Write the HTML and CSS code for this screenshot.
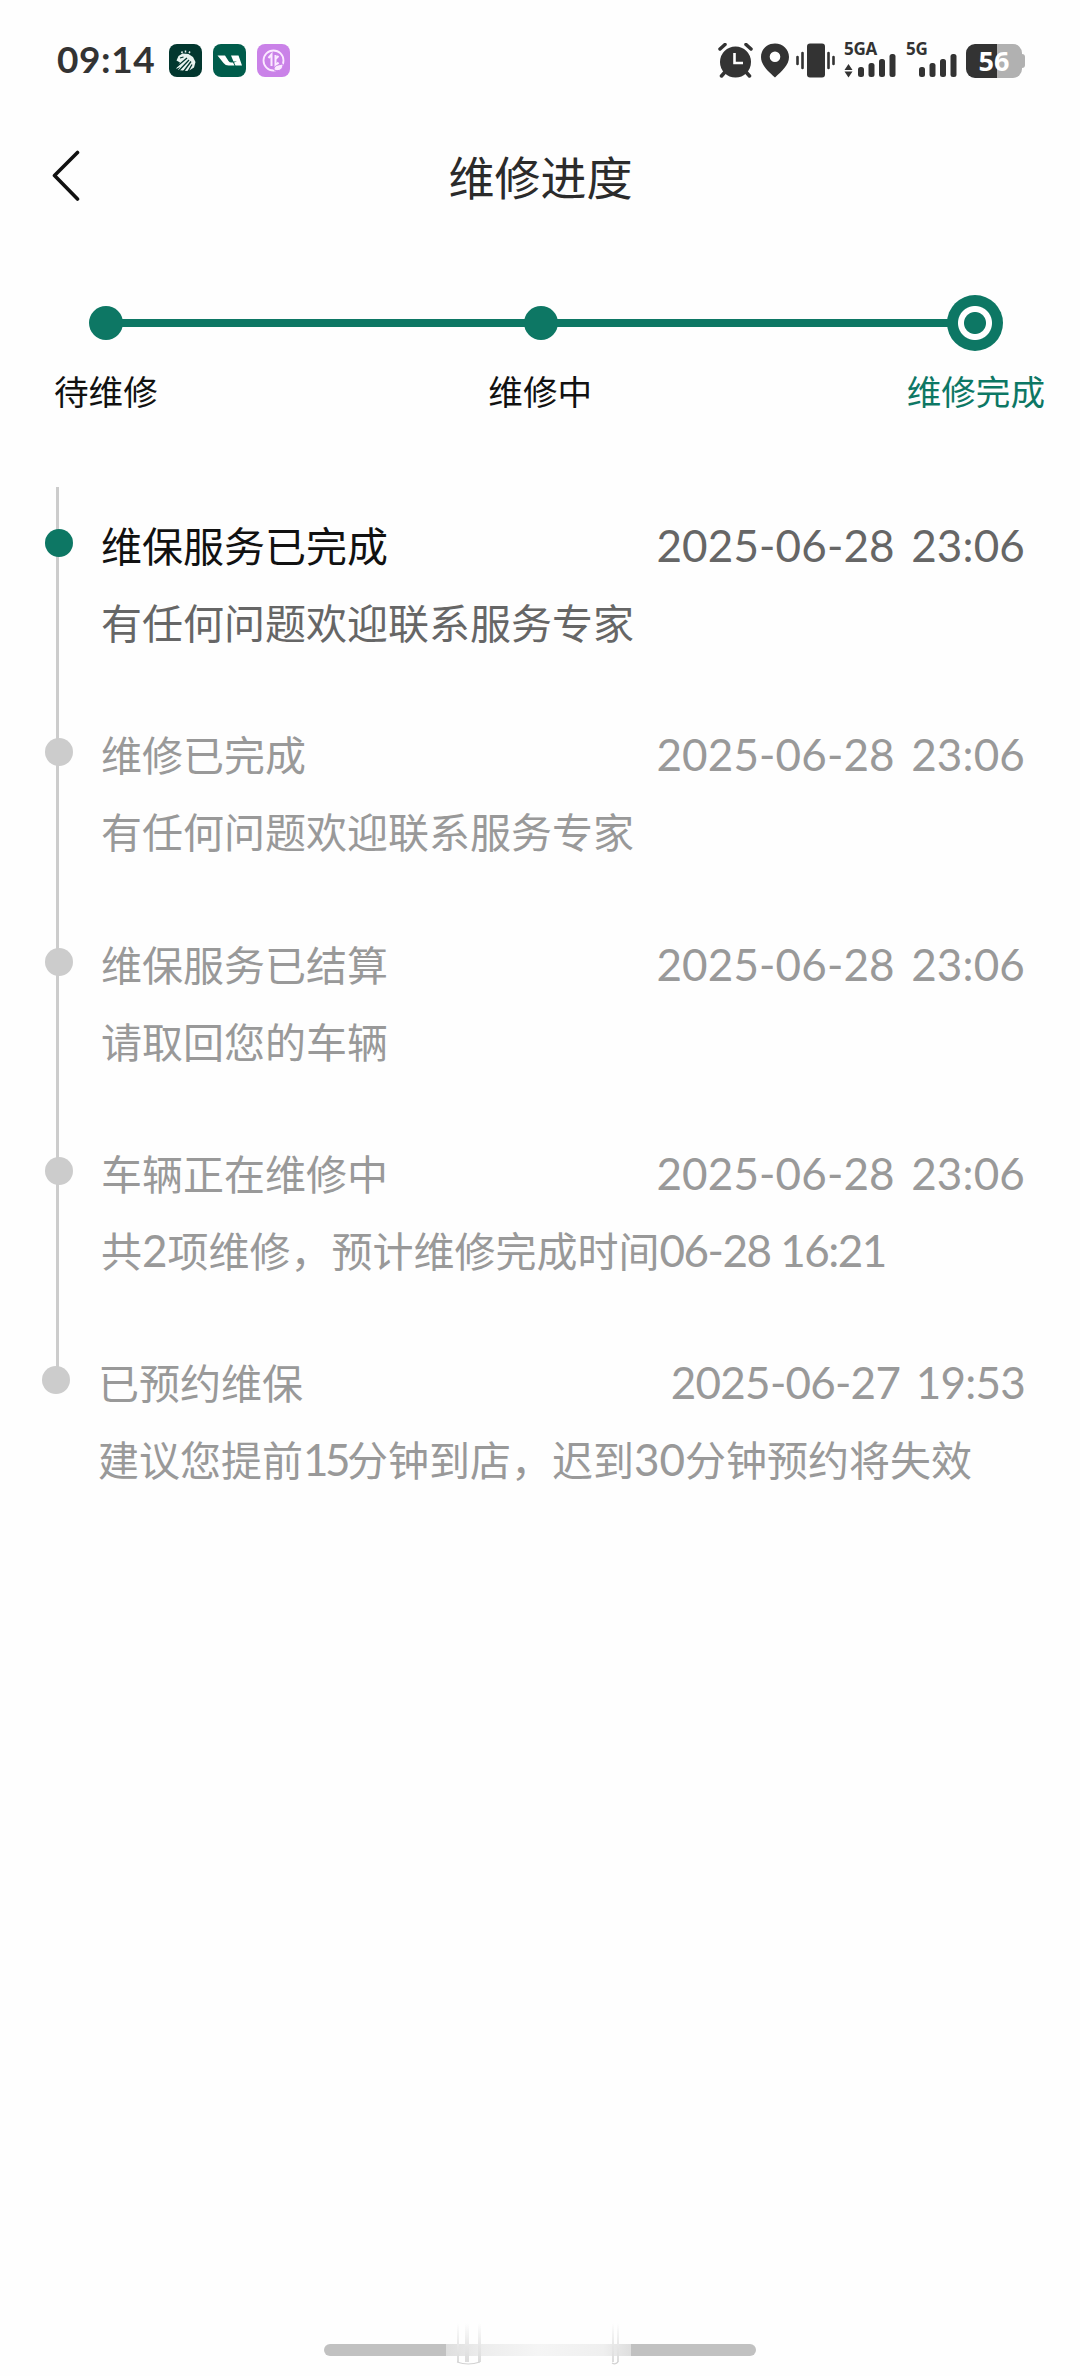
FILE: index.html
```html
<!DOCTYPE html>
<html lang="zh-CN">
<head>
    <meta charset="UTF-8">
    <meta name="viewport" content="width=device-width, initial-scale=1.0">
    <title>维修进度</title>
    <link rel="stylesheet" href="styles.css">
</head>
<body>
    <div class="status-bar">
        <span class="clock">09:14</span>
        <div class="app-icons">
            <svg width="33" height="33" viewBox="0 0 33 33">
                <rect width="33" height="33" rx="8" fill="#02372f"/>
                <path d="M7.500 16.500l2-4.500 4-2.500 6 0.500 4.500 3 2.500 5-1.500 5.500-4 2.500-3 1-9-1 2-3-4 2 4-6.500z" fill="#e8f3ef"/>
                <path d="M8 22.500l10-8.500M9.500 27l10.500-11M14.500 27.500l7.500-10M19 27.500l4-7M11 14l3.500-1" fill="none" stroke="#02372f" stroke-width="1.300"/>
                <path d="M12.500 9l1-1.500M16.500 8.500V6.500M20 9l1-1.500" stroke="#e8f3ef" stroke-width="1.500"/>
            </svg>
            <svg width="33" height="33" viewBox="0 0 33 33">
                <rect width="33" height="33" rx="8" fill="#005c4b"/>
                <path d="M4.500 11.500h7.500l3.500 5.500q1 1.500 3 1.500h1.500l1.500 3h-6q-3 0-5-2.500z" fill="#fff"/>
                <path d="M18 11.500h7.500l3.500 10h-6.500l-1.500-3 3-1h-3.500z" fill="#fff"/>
            </svg>
            <svg width="33" height="33" viewBox="0 0 33 33">
                <rect width="33" height="33" rx="8" fill="#ca82e8"/>
                <circle cx="16.500" cy="16.500" r="10" fill="none" stroke="#fbeaff" stroke-width="1.800"/>
                <path d="M11.500 14l3-3.500v11.500M18.500 11v11l3-3.500M18.500 15l3-3" fill="none" stroke="#fbeaff" stroke-width="2"/>
                <path d="M17 26c0-5 4-5 9-6 0 5-3 8-9 6z" fill="#fbeaff" stroke="#ca82e8" stroke-width="1"/>
            </svg>
        </div>
        <div class="system-icons">
            <svg width="35" height="35" viewBox="0 0 35 35">
                <circle cx="17.500" cy="19" r="15.500" fill="#333"/>
                <path d="M2 6l5-4.500M33 6l-5-4.500" stroke="#333" stroke-width="3.500" stroke-linecap="round"/>
                <path d="M7 29l-3.500 4M28 29l3.500 4" stroke="#333" stroke-width="3.500" stroke-linecap="round"/>
                <path d="M16.500 10v10h8.500" fill="none" stroke="#fff" stroke-width="2.600"/>
            </svg>
            <svg class="pin" width="28" height="35" viewBox="0 0 28 35">
                <path d="M14 0.500C6 .5 0 6.500 0 14c0 8 7 14 14 20.500C21 28 28 22 28 14 28 6.500 22 .5 14 .5zM14 8.500a5.300 5.300 0 1 1 0 10.600 5.300 5.300 0 0 1 0-10.600z" fill="#333" fill-rule="evenodd"/>
            </svg>
            <svg class="vibrate" width="40" height="35" viewBox="0 0 40 35">
                <rect x="11" y="0.500" width="18" height="34" rx="3" fill="#333"/>
                <path d="M1.500 14v7M6.500 10v15M32.500 10v15M37.500 14v7" stroke="#333" stroke-width="2.600" stroke-linecap="round"/>
            </svg>
            <div class="signal signal-a">
                <span>5GA</span>
                <svg width="52" height="24" viewBox="0 0 52 24">
                    <path d="M0.500 16l4-6 4 6zM0.500 17.500h8l-4 6z" fill="#333"/>
                    <rect x="14" y="13" width="6" height="10" rx="2.500" fill="#333"/>
                    <rect x="24.500" y="9" width="6" height="14" rx="2.500" fill="#333"/>
                    <rect x="35" y="5" width="6" height="18" rx="2.500" fill="#333"/>
                    <rect x="45.500" y="0" width="6" height="23" rx="2.500" fill="#333"/>
                </svg>
            </div>
            <div class="signal">
                <span>5G</span>
                <svg width="51" height="24" viewBox="0 0 51 24">
                    <rect x="13" y="13" width="6" height="10" rx="2.500" fill="#333"/>
                    <rect x="23.500" y="9" width="6" height="14" rx="2.500" fill="#333"/>
                    <rect x="34" y="5" width="6" height="18" rx="2.500" fill="#333"/>
                    <rect x="44.500" y="0" width="6" height="23" rx="2.500" fill="#333"/>
                </svg>
            </div>
            <div class="battery"><span>56</span></div>
        </div>
    </div>

    <div class="header">
        <svg class="back" width="28" height="52" viewBox="0 0 28 52">
            <path d="M25.500 2.500L2.500 25.500l23 23.500" fill="none" stroke="#111" stroke-width="3.600" stroke-linecap="round" stroke-linejoin="round"/>
        </svg>
        <h1>维修进度</h1>
    </div>

    <div class="steps">
        <span class="step-dot"></span>
        <span class="step-line first"></span>
        <span class="step-dot"></span>
        <span class="step-line"></span>
        <span class="step-dot current"></span>
    </div>
    <div class="step-labels">
        <span>待维修</span>
        <span class="middle">维修中</span>
        <span class="current">维修完成</span>
    </div>

    <div class="timeline">
        <div class="item active">
            <div class="rail"><span class="dot"></span></div>
            <div class="content">
                <div class="row"><h2>维保服务已完成</h2><time>2025-06-28 23:06</time></div>
                <p>有任何问题欢迎联系服务专家</p>
            </div>
        </div>
        <div class="item">
            <div class="rail"><span class="dot"></span></div>
            <div class="content">
                <div class="row"><h2>维修已完成</h2><time>2025-06-28 23:06</time></div>
                <p>有任何问题欢迎联系服务专家</p>
            </div>
        </div>
        <div class="item">
            <div class="rail"><span class="dot"></span></div>
            <div class="content">
                <div class="row"><h2>维保服务已结算</h2><time>2025-06-28 23:06</time></div>
                <p>请取回您的车辆</p>
            </div>
        </div>
        <div class="item">
            <div class="rail"><span class="dot"></span></div>
            <div class="content">
                <div class="row"><h2>车辆正在维修中</h2><time>2025-06-28 23:06</time></div>
                <p>共<b>2</b>项维修，预计维修完成时间<b class="when">06-28 16:21</b></p>
            </div>
        </div>
        <div class="item last">
            <div class="rail"><span class="dot"></span></div>
            <div class="content">
                <div class="row"><h2>已预约维保</h2><time>2025-06-27 19:53</time></div>
                <p>建议您提前<b class="narrow">15</b>分钟到店，迟到<b>30</b>分钟预约将失效</p>
            </div>
        </div>
    </div>

    <svg class="home-bar" width="432" height="46" viewBox="0 0 432 46">
        <defs>
            <linearGradient id="shine" x1="0" x2="1" y1="0" y2="0">
                <stop offset="0" stop-color="#dedede"/>
                <stop offset="0.200" stop-color="#ededed"/>
                <stop offset="0.500" stop-color="#f5f5f5"/>
                <stop offset="0.850" stop-color="#efefef"/>
                <stop offset="1" stop-color="#dedede"/>
            </linearGradient>
            <linearGradient id="streak" x1="0" x2="0" y1="0" y2="1">
                <stop offset="0" stop-color="#fefefe"/>
                <stop offset="0.600" stop-color="#e6e6e6"/>
                <stop offset="1" stop-color="#dcdcdc"/>
            </linearGradient>
        </defs>
        <rect y="23" width="432" height="12" rx="6" fill="#c1c1c1"/>
        <rect x="122" y="22" width="185" height="14" fill="#fefefe"/>
        <rect x="122" y="23" width="185" height="12" fill="url(#shine)"/>
        <rect x="133" y="2" width="2" height="39" fill="url(#streak)"/>
        <rect x="141" y="2" width="4" height="39" fill="url(#streak)"/>
        <rect x="154" y="2" width="3" height="39" fill="url(#streak)"/>
        <rect x="288" y="2" width="2" height="39" fill="url(#streak)"/>
        <rect x="293" y="2" width="2" height="39" fill="url(#streak)"/>
        <path d="M133 41q11 4 23 0M288 42q3 2 6-1" fill="none" stroke="#d2d2d2" stroke-width="1.200"/>
    </svg>
</body>
</html>
```
FILE: styles.css
```css
* {
    box-sizing: border-box;
}
body {
    margin: 0;
    width: 1080px;
    height: 2376px;
    display: flex;
    flex-direction: column;
    background-color: #fefefe;
    font-family: "Noto Sans CJK SC", sans-serif;
    color: #111;
}
svg {
    display: block;
    flex: none;
}
.status-bar {
    display: flex;
    align-items: center;
    height: 121px;
    padding: 0 56px;
}
.clock {
    width: 113px;
    padding: 0 0 3px 1px;
    font: bold 37px/44px Lato, sans-serif;
    letter-spacing: 0.6px;
    color: #333;
}
.app-icons {
    display: flex;
    gap: 11px;
}
.system-icons {
    display: flex;
    align-items: center;
    margin-left: auto;
}
.pin {
    margin-left: 8px;
}
.vibrate {
    margin-left: 7px;
}
.signal {
    display: flex;
    flex-direction: column;
    height: 35px;
    margin: 0 9px 0 10px;
}
.signal-a {
    margin: 0 0 0 8px;
}
.signal span {
    height: 11px;
    font: bold 17px/11px "Noto Sans", sans-serif;
    letter-spacing: -0.3px;
    color: #333;
    white-space: nowrap;
}
.signal svg {
    overflow: visible;
}
.battery {
    width: 59px;
    height: 34px;
    margin-right: -1px;
    display: flex;
    align-items: center;
}
.battery span {
    width: 56px;
    height: 34px;
    border-radius: 9px;
    background: linear-gradient(to right, #333 31px, #b1b1b1 31px);
    color: #fff;
    font: bold 27px/33px "Noto Sans", sans-serif;
    text-align: center;
}
.battery::after {
    content: "";
    width: 3px;
    height: 14px;
    border-radius: 0 6px 6px 0;
    background-color: #b1b1b1;
}
.header {
    display: flex;
    align-items: center;
    height: 110px;
    padding: 0 52px;
}
.header h1 {
    flex: 1;
    margin: 0 27px 3px 0;
    font-size: 46px;
    font-weight: 400;
    line-height: 60px;
    text-align: center;
    color: #2b2b2b;
}
.steps {
    display: flex;
    align-items: center;
    height: 56px;
    margin-top: 64px;
    padding: 0 77px 0 89px;
}
.step-dot {
    flex: none;
    width: 34px;
    height: 34px;
    border-radius: 50%;
    background-color: #0d7764;
}
.step-dot.current {
    width: 56px;
    height: 56px;
    background: radial-gradient(circle, #0d7764 10.500px, #fff 11.500px, #fff 16.500px, #0d7764 17.500px);
}
.step-line {
    flex: 1;
    height: 8px;
    margin: 0 -1px;
    background-color: #0d7764;
}
.step-line.first {
    flex: none;
    width: 403px;
}
.step-labels {
    display: flex;
    justify-content: space-between;
    height: 50px;
    margin-top: 14px;
    padding: 0 35px 0 54px;
    font-size: 34.600px;
    line-height: 50px;
}
.step-labels .middle {
    padding-left: 16px;
}
.step-labels .current {
    color: #0d7764;
}
.timeline {
    margin-top: 72px;
    padding: 0 55px 0 45px;
}
.item {
    display: flex;
    height: 209.250px;
    color: #999;
}
.item.active {
    color: #666;
}
.item.active h2 {
    color: #111;
}
.rail {
    width: 28px;
    padding-top: 42px;
    background: linear-gradient(#ccc, #ccc) 11px 0 / 3px 100% no-repeat;
}
.dot {
    display: block;
    width: 28px;
    height: 28px;
    border-radius: 50%;
    background-color: #ccc;
}
.active .dot {
    background-color: #0d7764;
}
.content {
    flex: 1;
    padding: 27px 0 0 28px;
}
.row {
    display: flex;
    justify-content: space-between;
    height: 60px;
}
.row h2, .content p {
    margin: 0;
    font-size: 41px;
    font-weight: 400;
    line-height: 60px;
    white-space: nowrap;
}
.content p {
    height: 60px;
    margin-top: 17px;
}
.row time, .content b {
    font: 400 44px/60px Lato, sans-serif;
}
.row time {
    padding-top: 1px;
    letter-spacing: 0.150px;
    word-spacing: 5px;
}
.content .when {
    letter-spacing: -1.500px;
}
.content .narrow {
    letter-spacing: -3.500px;
}
.item.last {
    margin-left: -3px;
}
.last time {
    letter-spacing: -0.750px;
}
.last .rail {
    background-position: 14px 0;
    background-size: 3px 50px;
}
.home-bar {
    margin: auto auto 9px;
}
```
